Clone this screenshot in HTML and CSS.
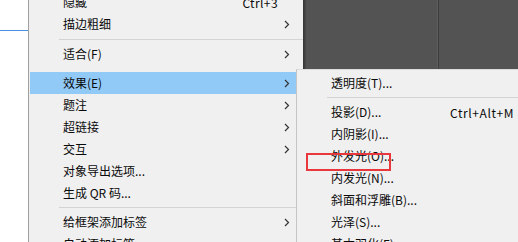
FILE: index.html
```html
<!DOCTYPE html>
<html lang="zh">
<head>
<meta charset="utf-8">
<link rel="stylesheet" href="styles.css">
</head>
<body>
<div class="page">
  <div class="left"><div class="blue"></div></div>
  <div class="menu">
    <div class="item"><span class="label">隐藏</span><span class="key">Ctrl+3</span></div>
    <div class="item"><span class="label">描边粗细</span><svg class="arrow" width="6" height="9" viewBox="0 0 6 9"><polyline points="1,1 4.5,4.5 1,8" fill="none" stroke="#333" stroke-width="1.2"/></svg></div>
    <div class="sep"></div>
    <div class="item"><span class="label">适合(F)</span><svg class="arrow" width="6" height="9" viewBox="0 0 6 9"><polyline points="1,1 4.5,4.5 1,8" fill="none" stroke="#333" stroke-width="1.2"/></svg></div>
    <div class="gap"></div>
    <div class="item active"><span class="label">效果(E)</span><svg class="arrow" width="6" height="9" viewBox="0 0 6 9"><polyline points="1,1 4.5,4.5 1,8" fill="none" stroke="#333" stroke-width="1.2"/></svg></div>
    <div class="item"><span class="label">题注</span><svg class="arrow" width="6" height="9" viewBox="0 0 6 9"><polyline points="1,1 4.5,4.5 1,8" fill="none" stroke="#333" stroke-width="1.2"/></svg></div>
    <div class="item"><span class="label">超链接</span><svg class="arrow" width="6" height="9" viewBox="0 0 6 9"><polyline points="1,1 4.5,4.5 1,8" fill="none" stroke="#333" stroke-width="1.2"/></svg></div>
    <div class="item"><span class="label">交互</span><svg class="arrow" width="6" height="9" viewBox="0 0 6 9"><polyline points="1,1 4.5,4.5 1,8" fill="none" stroke="#333" stroke-width="1.2"/></svg></div>
    <div class="item"><span class="label">对象导出选项...</span></div>
    <div class="item"><span class="label">生成 QR 码...</span></div>
    <div class="sep sep-b"></div>
    <div class="item"><span class="label">给框架添加标签</span><svg class="arrow" width="6" height="9" viewBox="0 0 6 9"><polyline points="1,1 4.5,4.5 1,8" fill="none" stroke="#333" stroke-width="1.2"/></svg></div>
    <div class="item"><span class="label">自动添加标签</span></div>
  </div>
  <div class="dark"><div class="vline"></div></div>

  <div class="submenu">
    <div class="sitem"><span class="label">透明度(T)...</span></div>
    <div class="ssep"></div>
    <div class="sitem"><span class="label">投影(D)...</span><span class="skey">Ctrl+Alt+M</span></div>
    <div class="sitem"><span class="label">内阴影(I)...</span></div>
    <div class="sitem"><span class="label">外发光(O)...</span></div>
    <div class="sitem"><span class="label">内发光(N)...</span></div>
    <div class="sitem"><span class="label">斜面和浮雕(B)...</span></div>
    <div class="sitem"><span class="label">光泽(S)...</span></div>
    <div class="sitem"><span class="label">基本羽化(F)...</span></div>
  </div>
  <div class="redbox"></div>
</div>
</body>
</html>
```
FILE: styles.css
```css
* { box-sizing: border-box; }
html, body { margin: 0; padding: 0; }
body {
  font-family: "Noto Sans CJK SC", "Noto Sans", sans-serif;
  font-size: 12px;
  color: #0a0a0a;
  background: #fff;
}
.page {
  position: relative;
  width: 518px;
  height: 242px;
  overflow: hidden;
  display: flex;
  align-items: flex-start;
}
.left {
  width: 28px;
  height: 242px;
  background: #fff;
  padding-top: 30px;
  flex: none;
}
.blue {
  height: 1px;
  background: #4a90e2;
}
.menu {
  flex: none;
  width: 275px;
  height: 260px;
  margin-top: -9px;
  background: #f0f0f0;
  border-left: 1px solid #a0a0a0;
  padding-left: 1px;
  box-shadow: 2px 0 2px rgba(0,0,0,0.35);
  position: relative;
  z-index: 1;
  display: flex;
  flex-direction: column;
}
.item {
  height: 22px;
  display: flex;
  align-items: center;
  padding-left: 33px;
  padding-right: 12px;
  flex: none;
}
.item .label { flex: 1; line-height: 22px; }
.item.active { background: #91c9f7; }
.key { margin-right: 13px; letter-spacing: 0.4px; }
.arrow { flex: none; margin-right: 1px; }
.sep {
  height: 8px;
  flex: none;
  display: flex;
  align-items: center;
  padding-left: 29px;
}
.sep::after {
  content: "";
  display: block;
  height: 1px;
  flex: 1;
  background: #d3d3d3;
}
.sep-b { height: 7px; }
.gap { height: 7px; flex: none; }
.dark {
  flex: 1;
  height: 69px;
  background: #535353;
  display: flex;
  padding-left: 134px;
}
.vline {
  width: 2px;
  height: 69px;
  background: #3c3c3c;
  border-left: 1px solid #5e5e5e;
}
.submenu {
  position: absolute;
  left: 296px;
  top: 69px;
  right: 0;
  bottom: 0;
  z-index: 2;
  background: #f0f0f0;
  border-left: 1px solid #c4c4c4;
  border-top: 1px solid #dcdcdc;
  padding-top: 2px;
  display: flex;
  flex-direction: column;
}
.sitem {
  height: 22px;
  flex: none;
  display: flex;
  align-items: center;
  padding-left: 34px;
}
.sitem .label { width: 119px; line-height: 22px; }
.skey { white-space: nowrap; letter-spacing: 0.6px; }
.ssep {
  height: 7px;
  flex: none;
  display: flex;
  align-items: center;
  padding-left: 30px;
}
.ssep::after {
  content: "";
  display: block;
  height: 1px;
  flex: 1;
  background: #d3d3d3;
}
.redbox {
  position: absolute;
  left: 306px;
  top: 153px;
  width: 85px;
  height: 18px;
  border: 2px solid #e8383d;
  z-index: 3;
}
```
